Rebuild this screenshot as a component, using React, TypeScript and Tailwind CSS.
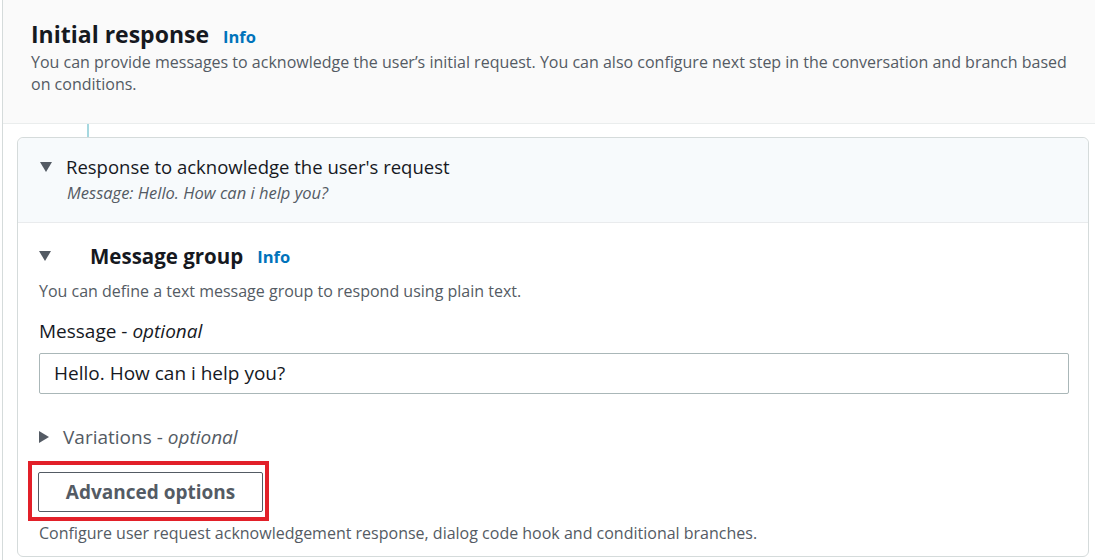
import React from "react";

const font = { fontFamily: '"Open Sans", "Noto Sans", sans-serif' };

function TriDown() {
  return (
    <svg width="12" height="10" viewBox="0 0 12 10" className="shrink-0">
      <path d="M0 0 H12 L6 10 Z" fill="#545b64" />
    </svg>
  );
}
function TriRight() {
  return (
    <svg width="10" height="12" viewBox="0 0 10 12" className="shrink-0">
      <path d="M0 0 V12 L10 6 Z" fill="#545b64" />
    </svg>
  );
}

export default function App() {
  return (
    <div className="w-[1095px] h-[560px] overflow-hidden bg-white" style={font}>
      <div className="ml-[2px] h-full border-l border-[#d5dbdb] flex flex-col">
        <div className="bg-[#fafafa] border-b border-[#eaeded] h-[124px] pl-[28px] pr-[20px] pt-[18px]">
          <div className="flex items-baseline gap-[14px]">
            <h1 className="text-[23px] font-bold text-[#16191f] leading-[32px]">Initial response</h1>
            <span className="text-[16.5px] font-bold text-[#0073bb]">Info</span>
          </div>
          <p className="text-[16px] leading-[22px] text-[#545b64] mt-[1px]">
            You can provide messages to acknowledge the user’s initial request. You can also configure next step in the conversation and branch based on conditions.
          </p>
        </div>
        <div className="relative pl-[14px] pr-[6px] pt-[13px]">
          <div className="absolute left-[84px] top-0 w-[2px] h-[13px] bg-[#a6d8e0]" />
          <div className="border border-[#d5dbdb] rounded-[6px] h-[420px]">
            <div className="bg-[#f7fafc] border-b border-[#e9ebed] rounded-t-[6px] h-[85px] pl-[22px] pt-[15px]">
              <div className="flex items-center gap-[14px]">
                <TriDown />
                <span className="text-[18.5px] text-[#16191f] leading-[28px]">Response to acknowledge the user's request</span>
              </div>
              <div className="pl-[27px] text-[16.5px] italic text-[#545b64] leading-[24px]">
                Message: Hello. How can i help you?
              </div>
            </div>
            <div className="pl-[21px] pr-[19px] pt-[19px]">
              <div className="flex items-center h-[28px]">
                <TriDown />
                <span className="ml-[39px] text-[20.5px] font-bold text-[#16191f] leading-[28px]">Message group</span>
                <span className="ml-[14px] text-[16.5px] font-bold text-[#0073bb] mt-[2px]">Info</span>
              </div>
              <p className="text-[16px] text-[#545b64] leading-[22px] mt-[10px]">
                You can define a text message group to respond using plain text.
              </p>
              <div className="text-[19px] text-[#16191f] leading-[26px] mt-[16px]">
                Message - <span className="italic">optional</span>
              </div>
              <div className="mt-[9px] h-[41px] border border-[#aab7b8] rounded-[2px] flex items-center pl-[14px] text-[19px] text-[#16191f]">
                Hello. How can i help you?
              </div>
              <div className="flex items-center gap-[14px] mt-[30px] h-[26px] text-[19px] text-[#545b64] leading-[26px]">
                <TriRight />
                <span>Variations - <span className="italic">optional</span></span>
              </div>
              <div className="mt-[11px] ml-[-11px] w-[241px] h-[60px] border-[4px] border-[#e22029] pl-[6px] pt-[7px]">
                <div className="w-[225px] h-[40px] border border-[#545b64] rounded-[2px] flex items-center justify-center text-[19px] font-bold text-[#545b64]">
                  Advanced options
                </div>
              </div>
              <p className="text-[16px] text-[#545b64] leading-[22px] mt-[1px]">
                Configure user request acknowledgement response, dialog code hook and conditional branches.
              </p>
            </div>
          </div>
        </div>
      </div>
    </div>
  );
}
